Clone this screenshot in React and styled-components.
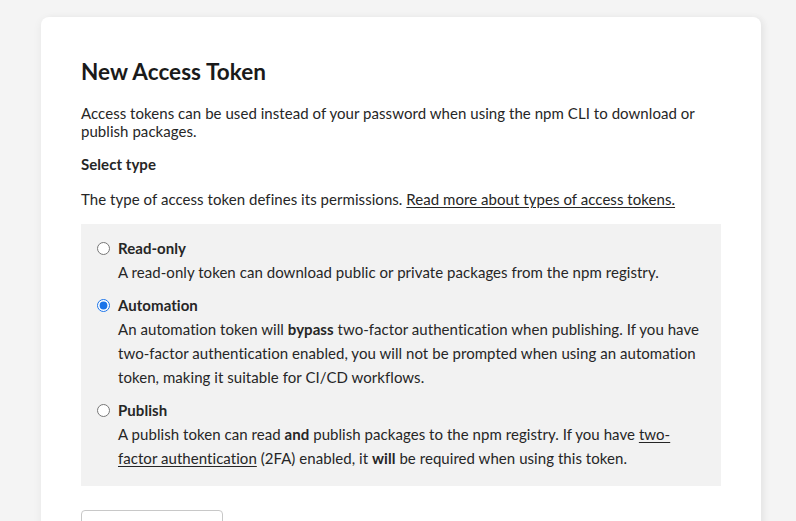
import React, { useState } from 'react'
import styled, { createGlobalStyle } from 'styled-components'

const GlobalStyle = createGlobalStyle`
  html, body {
    margin: 0;
    padding: 0;
    background: #f4f4f4;
    font-family: Lato, 'Liberation Sans', sans-serif;
    color: #262626;
    overflow: hidden;
  }
`

const types = [
  {
    id: 'readonly',
    label: 'Read-only',
    text: <>A read-only token can download public or private packages from the npm registry.</>,
  },
  {
    id: 'automation',
    label: 'Automation',
    text: (
      <>
        An automation token will <b>bypass</b> two-factor authentication when publishing. If you
        have two-factor authentication enabled, you will not be prompted when using an automation
        token, making it suitable for CI/CD workflows.
      </>
    ),
  },
  {
    id: 'publish',
    label: 'Publish',
    text: (
      <>
        A publish token can read <b>and</b> publish packages to the npm registry. If you have{' '}
        <a href='#2fa'>two-factor authentication</a> (2FA) enabled, it <b>will</b> be required
        when using this token.
      </>
    ),
  },
]

const App = () => {
  const [type, setType] = useState('automation')

  return (
    <Page>
      <GlobalStyle />
      <Card>
        <Title>New Access Token</Title>
        <Intro>
          Access tokens can be used instead of your password when using the npm CLI to download or
          publish packages.
        </Intro>
        <Label>Select type</Label>
        <Intro>
          The type of access token defines its permissions.{' '}
          <a href='#types'>Read more about types of access tokens.</a>
        </Intro>
        <Options>
          {types.map((t) => (
            <Option key={t.id}>
              <Radio
                type='radio'
                name='type'
                checked={type === t.id}
                onChange={() => setType(t.id)}
              />
              <OptionBody>
                <OptionLabel>{t.label}</OptionLabel>
                <OptionText>{t.text}</OptionText>
              </OptionBody>
            </Option>
          ))}
        </Options>
        <Button>Generate Token</Button>
      </Card>
    </Page>
  )
}

const Page = styled.div`
  height: 521px;
  padding: 17px 35px 0 41px;
  box-sizing: border-box;
`

const Card = styled.div`
  width: 720px;
  min-height: 560px;
  box-sizing: border-box;
  padding: 40px 40px;
  background: #fff;
  border-radius: 8px;
  box-shadow: 0 2px 10px rgba(0, 0, 0, 0.06), 4px 0 6px rgba(0, 0, 0, 0.03);
  letter-spacing: 0.05px;

  a {
    color: inherit;
    text-decoration: underline;
    text-underline-offset: 2px;
  }
`

const Title = styled.h2`
  margin: 0;
  font-size: 22.5px;
  line-height: 30px;
  font-weight: 700;
  color: #1a1a1a;
`

const Intro = styled.p`
  margin: 17px 0 0;
  font-size: 15px;
  line-height: 18px;
`

const Label = styled.div`
  margin-top: 15px;
  font-size: 15px;
  line-height: 18px;
  font-weight: 700;
`

const Options = styled.div`
  margin-top: 16px;
  padding: 12px 14px 16px 16px;
  background: #f2f2f2;
  display: flex;
  flex-direction: column;
  gap: 9px;
`

const Option = styled.label`
  display: flex;
  gap: 8px;
  align-items: flex-start;
`

const Radio = styled.input`
  margin: 6px 0 0;
  width: 13px;
  height: 13px;
  flex: none;
  accent-color: #1a73e8;
`

const OptionBody = styled.div`
  display: flex;
  flex-direction: column;
`

const OptionLabel = styled.span`
  font-size: 15px;
  line-height: 24px;
  font-weight: 700;
`

const OptionText = styled.span`
  font-size: 15px;
  line-height: 24px;
`

const Button = styled.button`
  margin-top: 24px;
  width: 142px;
  height: 46px;
  background: #fff;
  border: 1px solid #c8c8c8;
  border-radius: 4px;
  font-family: inherit;
  font-size: 15px;
  color: #262626;
`

export default App
